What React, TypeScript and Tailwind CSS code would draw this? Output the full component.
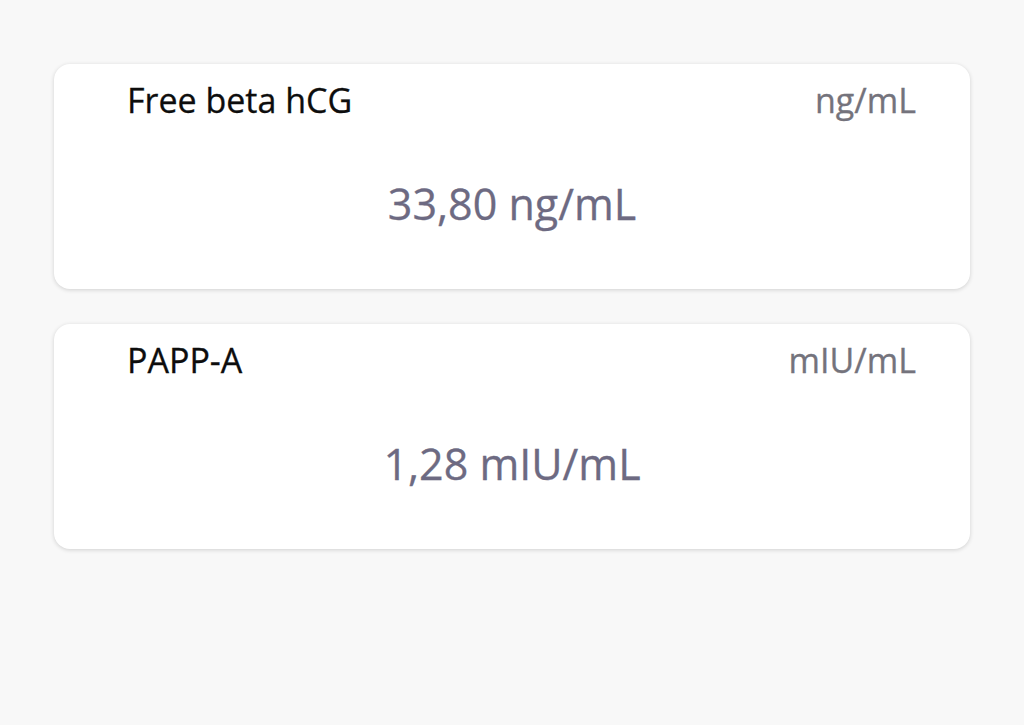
import { FC } from "react";

type Marker = {
  name: string;
  unit: string;
  value: string;
};

const markers: Marker[] = [
  { name: "Free beta hCG", unit: "ng/mL", value: "33,80" },
  { name: "PAPP-A", unit: "mIU/mL", value: "1,28" },
];

const MarkerCard: FC<{ marker: Marker }> = ({ marker }) => {
  return (
    <div className="bg-white rounded-2xl shadow-[0_1px_4px_rgba(0,0,0,0.16)] h-[225px] pt-[13px] pl-[73px] pr-[54px]">
      <div className="flex justify-between items-start">
        <span className="text-[34px] leading-[46px] text-[#0d0d0d] [-webkit-text-stroke:0.3px_#0d0d0d]">
          {marker.name}
        </span>
        <span className="text-[34px] leading-[46px] text-[#74737c] [-webkit-text-stroke:0.3px_#74737c]">
          {marker.unit}
        </span>
      </div>
      <div className="mt-[52px] -ml-[19px] text-center text-[43px] leading-[58px] text-[#6d6a82] [-webkit-text-stroke:0.3px_#6d6a82]">
        {marker.value} {marker.unit}
      </div>
    </div>
  );
};

const App: FC = () => {
  return (
    <div
      className="min-h-[725px] bg-[#f8f8f8] px-[54px] pt-[64px] flex flex-col gap-[35px]"
      style={{ fontFamily: '"Open Sans", "Noto Sans", sans-serif' }}
    >
      {markers.map((m) => (
        <MarkerCard key={m.name} marker={m} />
      ))}
    </div>
  );
};

export default App;
